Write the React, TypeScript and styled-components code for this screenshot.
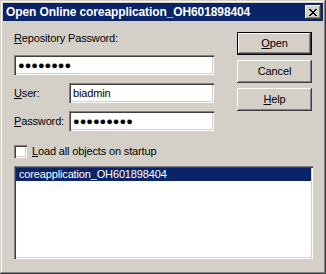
import React from "react"
import styled, { createGlobalStyle } from "styled-components"

const GlobalStyle = createGlobalStyle`
  body {
    margin: 0;
    background: #ffffff;
  }
`

const raised = `
  box-shadow: inset -1px -1px #404040, inset 1px 1px #ffffff, inset -2px -2px #808080, inset 2px 2px #d4d0c8;
`

const sunken = `
  box-shadow: inset 1px 1px #808080, inset 2px 2px #404040, inset -1px -1px #ffffff, inset -2px -2px #d4d0c8;
`

const Window = styled.div`
  width: 326px;
  height: 274px;
  box-sizing: border-box;
  padding: 3px;
  background: #d4d0c8;
  box-shadow: inset -1px -1px #404040, inset 1px 1px #d4d0c8, inset -2px -2px #808080, inset 2px 2px #ffffff;
  display: flex;
  flex-direction: column;
  font-family: "Liberation Sans", Arial, sans-serif;
  font-size: 11px;
  letter-spacing: -0.15px;
  color: #000000;
`

const TitleBar = styled.div`
  height: 18px;
  flex: none;
  background: #0a246a;
  color: #ffffff;
  display: flex;
  align-items: center;
  justify-content: space-between;
  padding: 0 2px 0 3px;
`

const Title = styled.span`
  font-weight: bold;
  font-size: 12px;
  letter-spacing: -0.1px;
  line-height: 14px;
`

const CloseButton = styled.div`
  width: 16px;
  height: 14px;
  background: #d4d0c8;
  ${raised}
  display: flex;
  align-items: center;
  justify-content: center;
`

const Body = styled.div`
  display: flex;
  flex-direction: column;
  padding: 11px 10px 0 11px;
`

const Top = styled.div`
  display: flex;
  gap: 23px;
`

const FormCol = styled.div`
  width: 200px;
  display: flex;
  flex-direction: column;
`

const Label = styled.div<{ $width?: number }>`
  line-height: 13px;
  height: 13px;
  white-space: nowrap;
  flex: none;
  ${(p) => p.$width && `width: ${p.$width}px;`}
`

const Field = styled.div<{ $mt?: number }>`
  height: 20px;
  flex: 1 1 auto;
  align-self: stretch;
  box-sizing: border-box;
  background: #ffffff;
  ${sunken}
  display: flex;
  align-items: center;
  padding-left: 4px;
  margin-top: ${(p) => p.$mt || 0}px;
  line-height: 13px;
`

const FullField = styled(Field)`
  flex: none;
`

const Mask = styled.span`
  font-size: 11px;
  letter-spacing: 0px;
  padding-top: 1px;
`

const Row = styled.div<{ $mt: number }>`
  display: flex;
  align-items: center;
  height: 20px;
  margin-top: ${(p) => p.$mt}px;
`

const CheckRow = styled.div`
  display: flex;
  align-items: center;
  margin-top: 14px;
  gap: 5px;
`

const CheckBox = styled.div`
  width: 13px;
  height: 13px;
  flex: none;
  box-sizing: border-box;
  background: #ffffff;
  ${sunken}
`

const ButtonCol = styled.div`
  width: 75px;
  display: flex;
  flex-direction: column;
  gap: 5px;
`

const Button = styled.div<{ $default?: boolean }>`
  height: 23px;
  flex: none;
  box-sizing: border-box;
  background: #d4d0c8;
  display: flex;
  align-items: center;
  justify-content: center;
  line-height: 13px;
  ${(p) =>
    p.$default
      ? `border: 1px solid #000000;
         box-shadow: inset -1px -1px #404040, inset 1px 1px #ffffff, inset -2px -2px #808080;`
      : raised}
`

const ListBox = styled.div`
  margin-top: 8px;
  width: 299px;
  height: 93px;
  flex: none;
  box-sizing: border-box;
  background: #ffffff;
  ${sunken}
  padding: 2px;
`

const ListItem = styled.div<{ $selected?: boolean }>`
  height: 13px;
  line-height: 13px;
  padding-left: 3px;
  background: ${(p) => (p.$selected ? "#0a246a" : "transparent")};
  color: ${(p) => (p.$selected ? "#ffffff" : "#000000")};
`

const CloseGlyph = () => {
  const px: React.ReactNode[] = []
  for (let i = 0; i < 7; i++) {
    px.push(<rect key={`a${i}`} x={i} y={i} width={2} height={1} />)
    px.push(<rect key={`b${i}`} x={6 - i} y={i} width={2} height={1} />)
  }
  return (
    <svg width="8" height="7" viewBox="0 0 8 7" shapeRendering="crispEdges" fill="#000000">
      {px}
    </svg>
  )
}

export default function App() {
  return (
    <>
      <GlobalStyle />
      <Window>
        <TitleBar>
          <Title>Open Online coreapplication_OH601898404</Title>
          <CloseButton>
            <CloseGlyph />
          </CloseButton>
        </TitleBar>
        <Body>
          <Top>
            <FormCol>
              <Label>
                <u>R</u>epository Password:
              </Label>
              <FullField $mt={10}>
                <Mask>●●●●●●●●</Mask>
              </FullField>
              <Row $mt={8}>
                <Label $width={55}>
                  <u>U</u>ser:
                </Label>
                <Field>biadmin</Field>
              </Row>
              <Row $mt={8}>
                <Label $width={55}>
                  <u>P</u>assword:
                </Label>
                <Field>
                  <Mask>●●●●●●●●●</Mask>
                </Field>
              </Row>
              <CheckRow>
                <CheckBox />
                <Label>
                  <u>L</u>oad all objects on startup
                </Label>
              </CheckRow>
            </FormCol>
            <ButtonCol>
              <Button $default>
                <span>
                  <u>O</u>pen
                </span>
              </Button>
              <Button>Cancel</Button>
              <Button>
                <span>
                  <u>H</u>elp
                </span>
              </Button>
            </ButtonCol>
          </Top>
          <ListBox>
            <ListItem $selected>coreapplication_OH601898404</ListItem>
          </ListBox>
        </Body>
      </Window>
    </>
  )
}
